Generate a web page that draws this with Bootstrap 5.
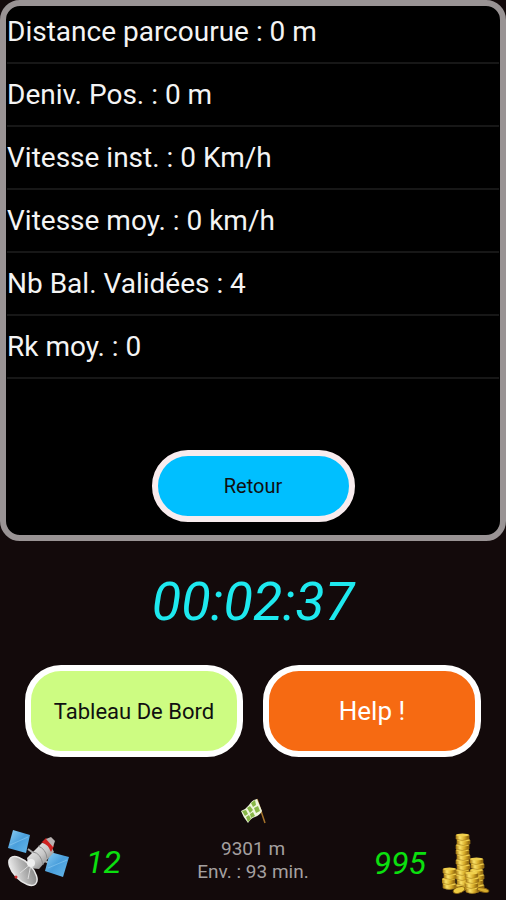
<!DOCTYPE html>
<html lang="fr">
<head>
<meta charset="utf-8">
<meta name="viewport" content="width=device-width, initial-scale=1">
<title>Course d'orientation</title>
<link href="https://cdn.jsdelivr.net/npm/bootstrap@5.3.0/dist/css/bootstrap.min.css" rel="stylesheet">
<style>
body{background:#130a0b;font-family:Roboto,"Liberation Sans",sans-serif}
.panel{background:#000;border:6px solid #999394;border-radius:20px;padding:0 1px 13px}
.stats{--bs-list-group-bg:transparent;--bs-list-group-color:#f4f4f4;margin-bottom:71px}
.stats .list-group-item{font-size:28px;line-height:40px;padding:11px 0 10px;border-width:0 0 2px;border-color:#171717}
.stats .list-group-item:first-child{padding-top:6px}
.stats .list-group-item:last-child{border-bottom-width:2px}
.pill{border:6px solid #fff;border-radius:36px;color:#101010}
.pill-back{background:#00bfff;border-color:#f8ecee;width:203px;height:72px;font-size:20px}
.pill-board{background:#cdfc82;height:92px;font-size:22px}
.pill-help{background:#f66a12;color:#fff;height:92px;font-size:26px}
.clock{font-size:54px;line-height:60px;font-style:italic;color:#1ee9ef;margin:31px 0 33px}
.actions{padding:0 25px;gap:20px}
.led{font-size:32px;line-height:36px;font-style:italic;color:#0be00f}
.status{padding:40px 8px 0}
.side{flex:1 1 0}
.estimate{color:#a5a0a0;font-size:19px;line-height:23px;margin-bottom:11px}
.flag{margin-bottom:12px}
</style>
<script src="https://cdn.jsdelivr.net/npm/bootstrap@5.3.0/dist/js/bootstrap.bundle.min.js"></script>
</head>
<body>
<main>
<section class="panel">
<ul class="list-group list-group-flush stats">
<li class="list-group-item">Distance parcourue : 0 m</li>
<li class="list-group-item">Deniv. Pos. : 0 m</li>
<li class="list-group-item">Vitesse inst. : 0 Km/h</li>
<li class="list-group-item">Vitesse moy. : 0 km/h</li>
<li class="list-group-item">Nb Bal. Validées : 4</li>
<li class="list-group-item">Rk moy. : 0</li>
</ul>
<div class="text-center"><button type="button" class="btn pill pill-back">Retour</button></div>
</section>
<div class="clock text-center">00:02:37</div>
<div class="actions d-flex">
<button type="button" class="btn pill pill-board flex-fill w-50 px-0">Tableau De Bord</button>
<button type="button" class="btn pill pill-help flex-fill w-50 px-0">Help !</button>
</div>
</main>
<footer class="status d-flex align-items-end">
<div class="side d-flex align-items-center gap-2">
<svg width="70" height="64" viewBox="5 4 70 64" aria-hidden="true">
<defs>
<linearGradient id="cell" x1="0" y1="0" x2="1" y2="1"><stop offset="0" stop-color="#8fd0f5"/><stop offset=".5" stop-color="#4a9fdc"/><stop offset="1" stop-color="#66b8ea"/></linearGradient>
<linearGradient id="hull" x1="0" y1="0" x2="1" y2="1"><stop offset="0" stop-color="#f4f4f4"/><stop offset=".5" stop-color="#c9c9c9"/><stop offset="1" stop-color="#666"/></linearGradient>
<linearGradient id="dish" x1="0" y1="1" x2="1" y2="0"><stop offset="0" stop-color="#fff"/><stop offset=".5" stop-color="#b5b5b5"/><stop offset="1" stop-color="#777"/></linearGradient>
</defs>
<path d="M25 23l8 6M40 34l8 4" stroke="#aaa" stroke-width="2"/>
<path d="M10 4l17 5-4 18-18-5z" fill="url(#cell)"/>
<path d="M47 26l19 5-6 20-18-6z" fill="url(#cell)"/>
<path d="M7 19L25 11M45 42L64 34" stroke="#9ad5f7" stroke-width=".5"/>
<path d="M24 32l15-15 8 1 4 8-15 17-10-1z" fill="url(#hull)"/>
<path d="M30 26q8 1 10 13M35 20q8 3 9 12" fill="none" stroke="#8d8d8d"/>
<path d="M39 16l4-4 8 8-3 6q-3-8-10-10z" fill="#cf2220"/>
<path d="M43 13l5-2 4 4-2 6z" fill="#b9b3b3"/>
<ellipse cx="20" cy="45" rx="18" ry="9" transform="rotate(46 20 45)" fill="url(#dish)" stroke="#e8e8e8" stroke-width="1.500"/>
<path d="M17 47l11-9-3 15" fill="none" stroke="#ddd" stroke-width="1"/>
<circle cx="28" cy="37" r="4" fill="#eee"/>
<circle cx="13" cy="51" r="1.500" fill="#d12d2d"/>
</svg>
<span class="led">12</span>
</div>
<div class="estimate text-center">
<svg class="flag" width="28" height="28" viewBox="0 0 28 28" aria-hidden="true">
<path d="M18 2l8 24" stroke="#a5732b" stroke-width="1.500"/>
<path d="M18 2q-5 1-8 6-3 4-8 6 2 6 7 12 3-5 7-6 5-2 7-6z" fill="#eef5dc"/>
<path d="M12 6l4-3 1 5-3 2zM15 11l4-2 2 5-4 2zM8 11l3-2 3 4-3 3zM3 14l4-1 2 4-3 2zM11 17l3-2 2 4-4 2zM7 20l3-2 2 4-3 3z" fill="#87b647"/>
</svg>
<div>9301 m</div>
<div>Env. : 93 min.</div>
</div>
<div class="side d-flex align-items-center justify-content-end gap-3">
<span class="led">995</span>
<svg class="me-2" width="48" height="62" viewBox="1 2 48 62" aria-hidden="true">
<defs>
<linearGradient id="gold"><stop offset="0" stop-color="#a87a13"/><stop offset=".3" stop-color="#fbe36a"/><stop offset=".65" stop-color="#d6aa27"/><stop offset="1" stop-color="#80580a"/></linearGradient>
<g id="coin"><path d="M0 2v4q6 3 13 0V2z" fill="url(#gold)" stroke="#a87f1c" stroke-width=".6"/><ellipse cx="6.500" cy="2" rx="6.500" ry="1.500" fill="#f0d04d"/></g>
</defs>
<use href="#coin" x="2" y="52"/><use href="#coin" x="1" y="47"/><use href="#coin" x="3" y="42"/><use href="#coin" x="2" y="37"/>
<use href="#coin" x="15" y="53"/><use href="#coin" x="16" y="48"/><use href="#coin" x="15" y="43"/><use href="#coin" x="15" y="38"/><use href="#coin" x="16" y="33"/><use href="#coin" x="15" y="28"/><use href="#coin" x="16" y="23"/><use href="#coin" x="15" y="18"/><use href="#coin" x="15" y="13"/><use href="#coin" x="16" y="8"/><use href="#coin" x="15" y="3"/>
<use href="#coin" x="30" y="53"/><use href="#coin" x="29" y="48"/><use href="#coin" x="30" y="43"/><use href="#coin" x="29" y="38"/><use href="#coin" x="30" y="32"/><use href="#coin" x="29" y="27"/>
<use href="#coin" x="25" y="56"/><use href="#coin" x="24" y="51"/><use href="#coin" x="25" y="46"/><use href="#coin" x="24" y="41"/>
<ellipse cx="18" cy="60" rx="6" ry="3" transform="rotate(-18 18 60)" fill="#edcb42" stroke="#8c6510"/>
<ellipse cx="42" cy="60" rx="6" ry="2" transform="rotate(12 42 60)" fill="#d8ad2d" stroke="#8c6510"/>
</svg>
</div>
</footer>
</body>
</html>
